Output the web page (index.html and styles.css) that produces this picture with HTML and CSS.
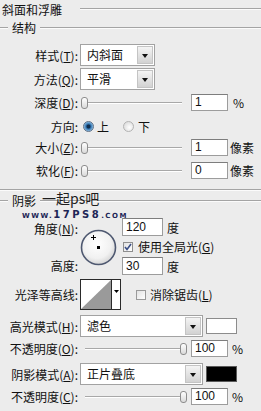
FILE: index.html
```html
<!DOCTYPE html>
<html lang="zh-CN">
<head>
    <meta charset="UTF-8">
    <meta name="viewport" content="width=device-width, initial-scale=1.0">
    <title>斜面和浮雕</title>
    <link rel="stylesheet" href="styles.css">
</head>
<body>
<div class="panel">
    <!-- 斜面和浮雕 -->
    <div class="title-row">
        <span class="title">斜面和浮雕</span>
        <span class="rule"></span>
    </div>

    <!-- 结构 -->
    <div class="legend legend-struct">
        <span class="lead"></span>
        <span class="legend-text">结构</span>
        <span class="rule"></span>
    </div>

    <div class="row row-style">
        <span class="lbl">样式(<u>T</u>):</span>
        <div class="select short"><span class="val">内斜面</span><span class="drop"></span></div>
    </div>

    <div class="row row-method">
        <span class="lbl">方法(<u>Q</u>):</span>
        <div class="select short"><span class="val">平滑</span><span class="drop"></span></div>
    </div>

    <div class="row row-depth">
        <span class="lbl">深度(<u>D</u>):</span>
        <div class="slider"><span class="thumb"></span><span class="track"></span></div>
        <span class="num">1</span>
        <span class="unit">%</span>
    </div>

    <div class="row row-dir">
        <span class="lbl">方向:</span>
        <span class="radio on"></span><span class="opt">上</span>
        <span class="radio off"></span><span class="opt opt-down">下</span>
    </div>

    <div class="row row-size">
        <span class="lbl">大小(<u>Z</u>):</span>
        <div class="slider"><span class="thumb"></span><span class="track"></span></div>
        <span class="num">1</span>
        <span class="unit px">像素</span>
    </div>

    <div class="row row-soft">
        <span class="lbl">软化(<u>F</u>):</span>
        <div class="slider"><span class="thumb"></span><span class="track"></span></div>
        <span class="num">0</span>
        <span class="unit px">像素</span>
    </div>

    <div class="separator"></div>

    <!-- 阴影 -->
    <div class="legend legend-shadow">
        <span class="lead"></span>
        <span class="legend-text">阴影</span>
        <span class="rule"></span>
    </div>

    <div class="angle-block">
        <div class="angle-labels">
            <span>角度(<u>N</u>):</span>
            <span>高度:</span>
        </div>
        <svg class="dial" width="37" height="37" viewBox="0 0 37 37">
            <defs>
                <radialGradient id="dialFill" cx="45%" cy="40%" r="60%">
                    <stop offset="0" stop-color="#ffffff"/>
                    <stop offset="0.7" stop-color="#f1f1f1"/>
                    <stop offset="1" stop-color="#d6d6d6"/>
                </radialGradient>
            </defs>
            <circle cx="18.5" cy="18.5" r="17" fill="url(#dialFill)" stroke="#4e5870" stroke-width="1.6"/>
            <rect x="17" y="17" width="3" height="3" fill="#000"/>
            <path d="M11 8.5h5M13.5 6v5" stroke="#000" stroke-width="1"/>
        </svg>
        <div class="angle-fields">
            <div class="field"><span class="num wide">120</span><span class="unit">度</span></div>
            <div class="check-line">
                <span class="check">
                    <svg width="8" height="8" viewBox="0 0 8 8"><path d="M1 4l2 2.5L7 1" fill="none" stroke="#3b4f86" stroke-width="1.6"/></svg>
                </span>
                <span class="check-text">使用全局光(<u>G</u>)</span>
            </div>
            <div class="field"><span class="num wide">30</span><span class="unit">度</span></div>
        </div>
    </div>

    <div class="row row-contour">
        <span class="lbl">光泽等高线:</span>
        <svg class="contour" width="41" height="31" viewBox="0 0 41 31">
            <rect x="0.5" y="0.5" width="40" height="30" fill="#fff" stroke="#2a2a2a"/>
            <polygon points="1,30 31,1 31,30" fill="#9a9a9a"/>
            <line x1="31.5" y1="1" x2="31.5" y2="30" stroke="#2a2a2a"/>
            <polygon points="34,11 39,11 36.5,14" fill="#000"/>
        </svg>
        <span class="check empty"></span>
        <span class="check-text">消除锯齿(<u>L</u>)</span>
    </div>

    <div class="row row-hmode">
        <span class="lbl">高光模式(<u>H</u>):</span>
        <div class="select long"><span class="val">滤色</span><span class="drop"></span></div>
        <span class="swatch white"></span>
    </div>

    <div class="row row-hop">
        <span class="lbl">不透明度(<u>O</u>):</span>
        <div class="slider end"><span class="track"></span><span class="thumb"></span></div>
        <span class="num">100</span>
        <span class="unit pct">%</span>
    </div>

    <div class="row row-smode">
        <span class="lbl">阴影模式(<u>A</u>):</span>
        <div class="select long"><span class="val">正片叠底</span><span class="drop"></span></div>
        <span class="swatch black"></span>
    </div>

    <div class="row row-sop">
        <span class="lbl">不透明度(<u>C</u>):</span>
        <div class="slider end"><span class="track"></span><span class="thumb"></span></div>
        <span class="num">100</span>
        <span class="unit pct">%</span>
    </div>

    <!-- watermark -->
    <span class="wm-cn">一起ps吧</span>
    <span class="wm-url">WWW.<b>17PS8</b>.COM</span>
</div>
</body>
</html>
```

FILE: styles.css
```css
* {
    margin: 0;
    padding: 0;
    box-sizing: border-box;
}

body {
    font-family: "Noto Sans CJK SC", "Noto Sans", sans-serif;
    font-size: 12px;
    color: #111;
    background-color: #ececec;
    width: 261px;
    height: 411px;
    overflow: hidden;
}

.panel {
    position: relative;
    width: 261px;
    height: 411px;
}

u {
    text-decoration: underline;
    text-underline-offset: 1px;
}

/* header lines */
.title-row {
    display: flex;
    align-items: center;
    height: 18px;
    padding-left: 2px;
}

.title-row .rule {
    margin-left: 18px;
}

.rule,
.lead,
.separator {
    height: 2px;
    border-top: 1px solid #a4a4a4;
    border-bottom: 1px solid #fbfbfb;
}

.rule {
    flex: 1;
}

.lead {
    width: 8px;
}

.legend {
    display: flex;
    align-items: center;
    height: 18px;
}

.legend-text {
    padding: 0 4px 0 4px;
    line-height: 18px;
}

.legend-struct {
    margin-top: 1px;
}

.separator {
    margin-top: 10px;
}

.legend-shadow {
    margin-top: 1px;
}

/* rows */
.row {
    display: flex;
    align-items: center;
}

.lbl {
    width: 78px;
    flex-shrink: 0;
    text-align: right;
    white-space: nowrap;
}

.row-style { margin-top: 7px; height: 22px; }
.row-method { margin-top: 2px; height: 22px; }
.row-depth { margin-top: 4px; height: 17px; }
.row-dir { margin-top: 9px; height: 13px; }
.row-size { margin-top: 6px; height: 17px; }
.row-soft { margin-top: 6px; height: 17px; }
.row-contour { margin-top: 4px; height: 31px; }
.row-hmode { margin-top: 5px; height: 22px; }
.row-hop { margin-top: 3px; height: 17px; }
.row-smode { margin-top: 6px; height: 22px; }
.row-sop { margin-top: 3px; height: 17px; }

/* select */
.select {
    display: flex;
    height: 22px;
    margin-left: 2px;
    background-color: #fff;
    border: 1px solid #a2a2a2;
}

.select.short {
    width: 75px;
}

.select.long {
    width: 123px;
}

.select .val {
    flex: 1;
    padding-left: 6px;
    line-height: 20px;
    white-space: nowrap;
    overflow: hidden;
}

.select .drop {
    position: relative;
    width: 16px;
    margin: 1px;
    background: linear-gradient(#f4f4f4, #d2d2d2);
    border: 1px solid #c4c4c4;
}

.select .drop::after {
    content: "";
    position: absolute;
    left: 4px;
    top: 7px;
    border-left: 3px solid transparent;
    border-right: 3px solid transparent;
    border-top: 4px solid #111;
}

/* slider */
.slider {
    display: flex;
    align-items: center;
    height: 12px;
    margin-left: 3px;
    width: 101px;
}

.slider.end {
    margin-left: 7px;
    width: 102px;
}

.track {
    flex: 1;
    height: 2px;
    border-top: 1px solid #a8a8a8;
    border-bottom: 1px solid #fff;
}

.thumb {
    width: 7px;
    height: 12px;
    border: 1px solid #8d8d8d;
    border-radius: 3px;
    background: linear-gradient(#ffffff, #d9d9d9);
}

/* number box */
.num {
    width: 37px;
    height: 17px;
    margin-left: 9px;
    padding-left: 3px;
    background-color: #fff;
    border: 1px solid #9c9c9c;
    border-top-color: #7d7d7d;
    font-family: "Liberation Sans", Arial, sans-serif;
    font-size: 12px;
    line-height: 15px;
}

.slider.end + .num {
    margin-left: 4px;
}

.num.wide {
    width: 41px;
    height: 18px;
    margin-left: 0;
    line-height: 16px;
}

.unit {
    margin-left: 5px;
}

.unit.px {
    margin-left: 2px;
}

.unit.pct {
    margin-left: 4px;
}

/* radio */
.radio {
    width: 11px;
    height: 11px;
    border-radius: 50%;
    flex-shrink: 0;
}

.radio.on {
    margin-left: 5px;
    border: 1px solid #5d6f86;
    background: radial-gradient(circle, #0f2c4c 0, #0f2c4c 1.5px, #2f73b0 2.5px, #9cc8ea 5px);
}

.radio.off {
    margin-left: 14px;
    border: 1px solid #b3b3b3;
    background: radial-gradient(circle at 60% 60%, #ffffff 0, #e2e2e2 5px);
}

.opt {
    margin-left: 3px;
}

.opt-down {
    margin-left: 4px;
}

/* angle / altitude */
.angle-block {
    display: flex;
    height: 57px;
    margin-top: 8px;
}

.angle-labels {
    width: 78px;
    display: flex;
    flex-direction: column;
    justify-content: space-between;
    text-align: right;
}

.angle-labels span {
    line-height: 18px;
}

.angle-labels span:first-child {
    padding-top: 3px;
    line-height: 15px;
}

.dial {
    margin: 11px 0 0 2px;
}

.angle-fields {
    display: flex;
    flex-direction: column;
    justify-content: space-between;
    margin-left: 5px;
}

.field {
    display: flex;
    align-items: center;
}

.field .unit {
    margin-left: 4px;
}

.check-line {
    display: flex;
    align-items: center;
    height: 11px;
}

.check {
    display: flex;
    align-items: center;
    justify-content: center;
    width: 10px;
    height: 10px;
    margin-left: 1px;
    background: linear-gradient(135deg, #e2e2e2, #ffffff);
    border: 1px solid #8e8e8e;
    flex-shrink: 0;
}

.check-text {
    margin-left: 5px;
    white-space: nowrap;
}

/* contour */
.contour {
    margin-left: 2px;
    flex-shrink: 0;
}

.check.empty {
    margin-left: 15px;
    border-color: #9a9a9a;
}

.row-contour .check-text {
    margin-left: 4px;
}

/* color swatches */
.swatch {
    width: 31px;
    height: 16px;
    margin-left: 3px;
    border: 1px solid #8c8c8c;
}

.swatch.white {
    background-color: #fff;
}

.swatch.black {
    background-color: #000;
    border-color: #5a5a5a;
}

/* watermark */
.wm-cn {
    position: absolute;
    left: 42px;
    top: 191px;
    font-size: 14px;
    line-height: 14px;
    color: #1e1e1e;
}

.wm-url {
    position: absolute;
    left: 22px;
    top: 211px;
    font-family: "DejaVu Sans", sans-serif;
    font-size: 7px;
    font-weight: bold;
    line-height: 8px;
    letter-spacing: 1.5px;
    color: #1d2556;
}

.wm-url b {
    font-size: 10px;
    letter-spacing: 2.5px;
}
```
